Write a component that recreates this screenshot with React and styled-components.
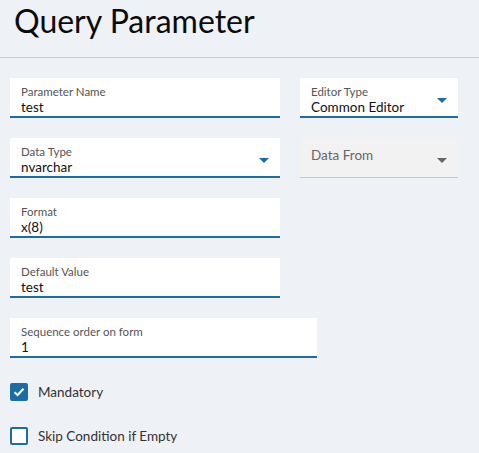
import React from 'react';
import styled, { createGlobalStyle } from 'styled-components';

const Global = createGlobalStyle`
  html, body { margin: 0; padding: 0; background: #eef1f5; }
  body { font-family: Lato, "Open Sans", sans-serif; color: #111; }
`;

const Page = styled.div`
  width: 479px;
  height: 453px;
  overflow: hidden;
  background: #eef1f5;
`;

const Header = styled.div`
  height: 57px;
  border-bottom: 1px solid #cdd1d6;
  padding-left: 14px;
  display: flex;
  align-items: flex-start;
`;

const Title = styled.h1`
  margin: 2px 0 0;
  font-weight: 400;
  font-size: 32px;
  line-height: 38px;
  color: #0b0b0b;
`;

const Body = styled.div`
  padding: 20px 10px 0;
  display: flex;
  flex-direction: column;
  gap: 20px;
`;

const Row = styled.div`
  display: flex;
  gap: 20px;
`;

const Field = styled.div`
  position: relative;
  width: ${p => p.$w}px;
  height: 40px;
  box-sizing: border-box;
  background: ${p => (p.$disabled ? '#f2f2f2' : '#fff')};
  border-bottom: ${p => (p.$disabled ? '1px solid #c9c9c9' : '2px solid #1b6ea5')};
  padding: 7px 11px 0;
  display: flex;
  flex-direction: column;
`;

const Label = styled.span`
  font-size: 11.5px;
  line-height: 13px;
  color: #555;
`;

const Placeholder = styled.span`
  font-size: 13.5px;
  line-height: 16px;
  margin-top: 2px;
  color: #666;
`;

const Value = styled.span`
  font-size: 13.5px;
  line-height: 17px;
  margin-top: 1px;
  color: #111;
`;

const Arrow = styled.span`
  position: absolute;
  right: ${p => p.$right}px;
  top: ${p => p.$top}px;
  width: 0;
  height: 0;
  border-left: 5px solid transparent;
  border-right: 5px solid transparent;
  border-top: 5px solid ${p => (p.$disabled ? '#666' : '#1b6ea5')};
`;

const Checks = styled.div`
  display: flex;
  flex-direction: column;
  gap: 26px;
  margin-top: 5px;
`;

const CheckRow = styled.label`
  display: flex;
  align-items: center;
  gap: 10px;
  font-size: 13.5px;
  color: #333;
`;

const Box = styled.span`
  width: 18px;
  height: 18px;
  box-sizing: border-box;
  border-radius: 2px;
  border: 2px solid #1b6ea5;
  background: ${p => (p.$on ? '#1b6ea5' : '#fff')};
  display: flex;
  align-items: center;
  justify-content: center;
`;

function Check({ on, children }) {
  return (
    <CheckRow>
      <Box $on={on}>
        {on && (
          <svg width="12" height="10" viewBox="0 0 12 10">
            <path d="M1.5 5.2 L4.6 8 L10.5 1.8" fill="none" stroke="#fff" strokeWidth="2" />
          </svg>
        )}
      </Box>
      {children}
    </CheckRow>
  );
}

export default function App() {
  return (
    <Page>
      <Global />
      <Header>
        <Title>Query Parameter</Title>
      </Header>
      <Body>
        <Row>
          <Field $w={270}>
            <Label>Parameter Name</Label>
            <Value>test</Value>
          </Field>
          <Field $w={158}>
            <Label>Editor Type</Label>
            <Value>Common Editor</Value>
            <Arrow $right={11} $top={20} />
          </Field>
        </Row>
        <Row>
          <Field $w={270}>
            <Label>Data Type</Label>
            <Value>nvarchar</Value>
            <Arrow $right={11} $top={20} />
          </Field>
          <Field $w={158} $disabled>
            <Placeholder>Data From</Placeholder>
            <Arrow $right={11} $top={20} $disabled />
          </Field>
        </Row>
        <Field $w={270}>
          <Label>Format</Label>
          <Value>x(8)</Value>
        </Field>
        <Field $w={270}>
          <Label>Default Value</Label>
          <Value>test</Value>
        </Field>
        <Field $w={307}>
          <Label>Sequence order on form</Label>
          <Value>1</Value>
        </Field>
        <Checks>
          <Check on>Mandatory</Check>
          <Check>Skip Condition if Empty</Check>
        </Checks>
      </Body>
    </Page>
  );
}
